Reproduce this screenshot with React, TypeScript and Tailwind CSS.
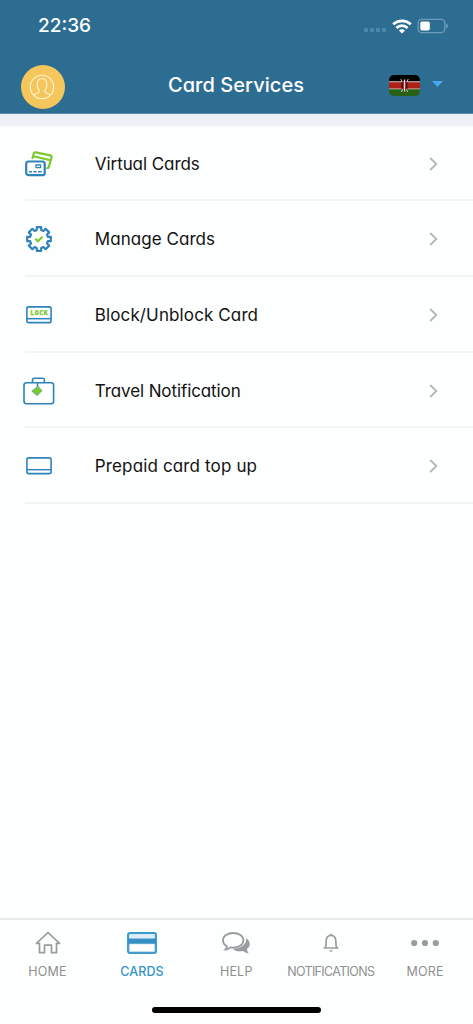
import React from "react";

const BLUE = "#2f83bb";
const GREEN = "#7bc92f";

function VirtualCardsIcon() {
  return (
    <svg width="28" height="26" viewBox="0 0 28 26" fill="none" strokeWidth="2.2" strokeLinejoin="round">
      <path d="M7.3 8 8.8 2.5Q9.2 1 10.8 1.3L25.2 4.3Q27 4.8 26.5 6.6L23.6 16.5Q23.2 17.4 21.4 17.2M8.500 5.200 25.500 9.200" stroke={GREEN} />
      <rect x="1.200" y="10.500" width="18.500" height="13.700" rx="2.300" stroke={BLUE} />
      <rect x="11" y="14" width="4.600" height="2.600" stroke={BLUE} strokeWidth="1.300" />
      <path d="M4 20.700h3M8.400 20.700h3.200M13 20.700h3.600" stroke={BLUE} strokeWidth="1.500" />
    </svg>
  );
}

function ManageCardsIcon() {
  return (
    <svg width="26" height="26" viewBox="0 0 26 26" fill="none">
      <path
        d="M10.8 1.200h4.400v2.900l2.200.9 2.200-2.200 3.600 3.600L21 8.600l.9 2.200h2.900v4.400h-2.900l-.9 2.200 2.200 2.200-3.600 3.600-2.200-2.200-2.200.9v2.900h-4.400v-2.900L8.600 21l-2.200 2.200-3.600-3.600L5 17.400l-.9-2.200H1.200v-4.400h2.900L5 8.600 2.800 6.400 6.400 2.800 8.600 5l2.200-.9z"
        stroke={BLUE} strokeWidth="2.200" strokeLinejoin="round"
      />
      <path d="m9.400 12.800 2.500 2.400 4.600-4.400" stroke={GREEN} strokeWidth="2.200" />
    </svg>
  );
}

function LockCardIcon() {
  return (
    <svg width="26" height="18" viewBox="0 0 26 18" fill="none">
      <rect x=".9" y=".9" width="24.200" height="15.700" rx="1.800" stroke={BLUE} strokeWidth="1.600" />
      <path d="M1 12.700h24" stroke={BLUE} strokeWidth="1.500" />
      <text x="4.300" y="9.300" fill={GREEN} stroke={GREEN} strokeWidth=".35" fontSize="6.600" fontWeight="700" textLength="17.500" lengthAdjust="spacing" fontFamily="'DejaVu Sans Mono', monospace">LOCK</text>
    </svg>
  );
}

function TravelIcon() {
  return (
    <svg width="32" height="28" viewBox="0 0 32 28" fill="none">
      <rect x="1" y="5.700" width="29.600" height="21" rx="2.500" stroke={BLUE} strokeWidth="1.600" />
      <path d="M9.500 5.500V3q0-1.700 1.700-1.700h8.500q1.700 0 1.700 1.700v2.500" stroke={BLUE} strokeWidth="1.600" />
      <path d="M14.500 5.700v4" stroke={BLUE} strokeWidth="1.500" />
      <path d="m14.500 8.700 4.600 5-5 5-5.300-4.700 4.600-3.400z" fill={GREEN} stroke={BLUE} strokeWidth=".5" />
    </svg>
  );
}

function PrepaidIcon() {
  return (
    <svg width="26" height="18" viewBox="0 0 26 18" fill="none" stroke={BLUE} strokeWidth="1.600">
      <rect x=".9" y=".9" width="24.200" height="15.700" rx="1.800" />
      <path d="M1 12.700h24" strokeWidth="1.400" />
    </svg>
  );
}

function KenyaFlag() {
  return (
    <svg width="31" height="21" viewBox="0 0 31 21" className="rounded-[5px]">
      <path d="M0 0h31v7H0z" fill="#000" />
      <path d="M0 6.200h31v9H0z" fill="#d3c8c6" />
      <path d="M0 7.200h31v6.200H0z" fill="#af1f1a" />
      <path d="M0 14.300h31V21H0z" fill="#286016" />
      <path d="m11.700 4 7 13M19.300 4l-7 13" stroke="#ddd4d2" strokeWidth=".9" />
      <ellipse cx="15.500" cy="10.400" rx="3" ry="5.200" fill="#8e1714" />
      <path d="M12.700 7.500q1.500 3 0 6M18.300 7.500q-1.500 3 0 6" stroke="#111" strokeWidth="1" fill="none" />
      <path d="M15.500 4.500v12" stroke="#eee0de" strokeWidth="1.300" />
    </svg>
  );
}

function HomeIcon() {
  return (
    <svg width="26" height="24" viewBox="0 0 26 24" fill="none" stroke="#999b9e" strokeWidth="1.700" strokeLinejoin="round">
      <path d="M13 1.500 1.500 12.300h3v9.400h5v-7.500h7v7.500h5v-9.400h3z" />
    </svg>
  );
}

function CardIcon() {
  return (
    <svg width="30" height="22" viewBox="0 0 30 22">
      <rect x="1.200" y="1.200" width="27.600" height="19.600" rx="1.500" fill="#fff" stroke="#3c9acb" strokeWidth="2.300" />
      <path d="M2.400 2.400h25.200v4H2.400z" fill="#dceef7" />
      <path d="M1 6.500h28v5.500H1z" fill="#348fc4" />
      <path d="M2.400 12h25.200v7.600H2.400z" fill="none" stroke="#b9dbec" strokeWidth=".7" />
    </svg>
  );
}

function ChatIcon() {
  return (
    <svg width="28" height="22" viewBox="0 0 28 22" fill="none">
      <path d="M24 6c4.800 3.300 4.800 8.200.9 11 .1 1.900.9 3 1.700 4.200-2.400 0-4.300-1.100-5.400-2.300-4.500 1-8.500 0-10.700-2.200 8.500.3 14.500-4.500 13.500-10.700z" fill="#999b9e" />
      <path d="M11.200 1C5.500 1 1 4.100 1 8.300c0 2.700 1.500 4.700 3.900 6 .1 1.400-.6 2.300-1.400 3.200 2-.2 3.600-1.100 4.800-2.200 1 .2 1.900.3 2.900.3 5.700 0 10.200-3.100 10.200-7.300S16.900 1 11.200 1z" stroke="#999b9e" strokeWidth="1.800" />
    </svg>
  );
}

function BellIcon() {
  return (
    <svg width="18" height="20" viewBox="0 0 18 20" fill="none" stroke="#999b9e" strokeWidth="1.700">
      <path d="M1.500 15h15M3.200 14.700c1.200-2 .8-4.500 1-7C4.400 4.500 6.200 2.500 9 2.500s4.600 2 4.800 5.200c.2 2.500-.2 5 1 7" />
      <path d="M9 .8v1.700" strokeWidth="2.200" />
      <path d="M7.200 17.200h3.600q-.5 1.600-1.800 1.600t-1.800-1.600z" fill="#999b9e" stroke="none" />
    </svg>
  );
}

function MoreIcon() {
  return (
    <svg width="30" height="8" viewBox="0 0 30 8" fill="#999b9e">
      <circle cx="4.200" cy="4" r="3.100" /><circle cx="15" cy="4" r="3.100" /><circle cx="25.800" cy="4" r="3.100" />
    </svg>
  );
}

const services = [
  { label: "Virtual Cards", icon: <VirtualCardsIcon />, spacing: "tracking-[-0.06px]" },
  { label: "Manage Cards", icon: <ManageCardsIcon />, spacing: "tracking-[0.05px]" },
  { label: "Block/Unblock Card", icon: <LockCardIcon />, spacing: "tracking-[0.12px]" },
  { label: "Travel Notification", icon: <TravelIcon />, spacing: "tracking-[-0.1px]" },
  { label: "Prepaid card top up", icon: <PrepaidIcon />, spacing: "tracking-[0.14px]" },
];

const tabs = [
  { label: "HOME", icon: <HomeIcon />, style: "text-[#8e9092] tracking-[0.2px]" },
  { label: "CARDS", icon: <CardIcon />, style: "text-[#3494c8] font-medium tracking-[0.1px]" },
  { label: "HELP", icon: <ChatIcon />, style: "text-[#8e9092] tracking-[0.2px]" },
  { label: "NOTIFICATIONS", icon: <BellIcon />, style: "text-[#8e9092] tracking-[-0.65px]" },
  { label: "MORE", icon: <MoreIcon />, style: "text-[#8e9092] tracking-[0.2px]" },
];

export default function App() {
  return (
    <div className="flex h-[1024px] w-[473px] flex-col overflow-hidden bg-[#fdfefe] font-['Inter',sans-serif]">
      <header className="h-[114px] shrink-0 border-b border-[#5c8aaa] bg-[#2d6d92] text-white">
        <div className="flex h-[52px] items-center pl-[38px] pr-[24px]">
          <span className="text-[19px] font-medium leading-6">22:36</span>
          <div className="ml-auto flex items-center">
            <div className="mr-[6px] mt-[8px] flex gap-[2px]">
              {[0, 1, 2, 3].map((i) => <span key={i} className="size-[4px] rounded-[1px] bg-[#4e89aa]" />)}
            </div>
            <svg width="20" height="15" viewBox="0 0 20 15" fill="none" stroke="#fff" strokeWidth="2.700">
              <path d="M1.200 5.300c5-4.700 12.600-4.700 17.600 0M4.400 8.900c3.200-3 8-3 11.200 0" />
              <path d="M6.900 11.500c1.700-1.600 4.500-1.600 6.200 0L10 14.500z" fill="#fff" stroke="none" />
            </svg>
            <svg className="ml-[5px]" width="32" height="16" viewBox="0 0 32 16">
              <rect x="1.200" y="1.400" width="26.600" height="13.200" rx="3.500" fill="none" stroke="#6c9cb7" strokeWidth="1.300" />
              <rect x="3.300" y="3.500" width="9.500" height="9" rx="1.700" fill="#fff" />
              <path d="M29.300 5.500q1.600.8 1.600 2.500t-1.600 2.500z" fill="#78a5bd" />
            </svg>
          </div>
        </div>
        <div className="grid grid-cols-[136px_200px_1fr] items-center pt-[13px]">
          <div className="ml-[20.500px] flex size-[44px] items-center justify-center rounded-full bg-[#f4c65b]">
            <svg className="-ml-px" width="26" height="26" viewBox="0 0 26 26" fill="none" stroke="#fff5dc" strokeWidth="1.100">
              <circle cx="13" cy="13" r="11.700" />
              <path d="M4.800 21.200c1.600-1.700 5.500-1.900 5.500-3.700 0-1.500-1.800-3.200-2-5.500C7.700 7.200 9.700 4.500 13 4.500s5.300 2.700 4.700 7.500c-.2 2.300-2 4-2 5.500 0 1.800 3.900 2 5.500 3.700" />
            </svg>
          </div>
          <h1 className="-mt-[5px] whitespace-nowrap text-center text-[20px] font-medium leading-7 tracking-[0.060px] [font-feature-settings:'cv11']">Card Services</h1>
          <div className="-mt-[4px] flex items-center pl-[53px]">
            <KenyaFlag />
            <svg className="-mt-[3px] ml-[12px]" width="11" height="6" viewBox="0 0 11 6"><path d="M0 0h11L5.500 6z" fill="#4ba7ef" /></svg>
          </div>
        </div>
      </header>

      <main className="flex-1 border-t-[12px] border-[#f0f1f6]">
        <ul className="-mt-px pt-[0.700px]">
          {services.map((item) => (
            <li key={item.label} className="ml-[25px] flex h-[75.700px] items-center border-b-2 border-[#f1f4f4] pt-[2.200px]">
              <div className="-ml-[5px] flex w-[38px] justify-center">{item.icon}</div>
              <span className={`ml-[36.800px] whitespace-nowrap text-[17px] leading-6 text-[#121212] [font-feature-settings:'cv11'] ${item.spacing}`}>{item.label}</span>
              <svg className="ml-auto mr-[35.500px]" width="9" height="14" viewBox="0 0 9 14" fill="none" stroke="#b7b9b9" strokeWidth="1.900"><path d="m1.200 1 6.100 6-6.100 6" /></svg>
            </li>
          ))}
        </ul>
      </main>

      <footer className="flex h-[106px] shrink-0 flex-col border-t-2 border-[#e5e9ea]">
        <nav className="grid grid-cols-[95px_94px_94.500px_94.500px_94px]">
          {tabs.map((tab) => (
            <button key={tab.label} className="flex flex-col items-center pt-[8px]">
              <span className="flex h-[30px] items-center">{tab.icon}</span>
              <span className={`mt-[4px] whitespace-nowrap text-[12.500px] leading-5 ${tab.style}`}>{tab.label}</span>
            </button>
          ))}
        </nav>
        <div className="mx-auto mt-[25px] h-[6px] w-[169px] rounded-full bg-black" />
      </footer>
    </div>
  );
}
